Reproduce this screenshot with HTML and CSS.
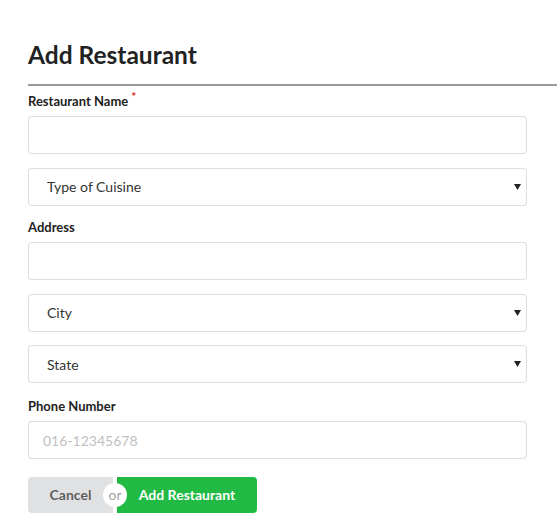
FILE: index.html
```html
<!DOCTYPE html>
<html lang="en">
<head>
    <meta charset="UTF-8">
    <meta name="viewport" content="width=device-width, initial-scale=1.0">
    <title>Add Restaurant</title>
    <link rel="stylesheet" href="styles.css">
</head>
<body>
    <div class="page">
        <h2 class="title">Add Restaurant</h2>
        <form class="form" id="restaurantForm">
            <div class="field">
                <label for="name" class="required">Restaurant Name</label>
                <input type="text" id="name">
            </div>
            <div class="field">
                <div class="select-wrap">
                    <select id="cuisine">
                        <option>Type of Cuisine</option>
                    </select>
                    <svg class="arrow" width="7" height="6" viewBox="0 0 7 6"><path d="M0 0h7L3.5 6z" fill="#222"/></svg>
                </div>
            </div>
            <div class="field">
                <label for="address">Address</label>
                <input type="text" id="address">
            </div>
            <div class="field">
                <div class="select-wrap">
                    <select id="city">
                        <option>City</option>
                    </select>
                    <svg class="arrow" width="7" height="6" viewBox="0 0 7 6"><path d="M0 0h7L3.5 6z" fill="#222"/></svg>
                </div>
            </div>
            <div class="field">
                <div class="select-wrap">
                    <select id="state">
                        <option>State</option>
                    </select>
                    <svg class="arrow" width="7" height="6" viewBox="0 0 7 6"><path d="M0 0h7L3.5 6z" fill="#222"/></svg>
                </div>
            </div>
            <div class="field phone">
                <label for="phone">Phone Number</label>
                <input type="text" id="phone" placeholder="016-12345678">
            </div>
            <div class="buttons">
                <button type="button" class="btn cancel">Cancel</button>
                <span class="or">or</span>
                <button type="submit" class="btn submit">Add Restaurant</button>
            </div>
        </form>
    </div>
</body>
</html>
```

FILE: styles.css
```css
body { margin: 0; font-family: Lato, "Open Sans", sans-serif; font-size: 14px; color: rgba(0,0,0,.87); background: #fff; }
.page { padding: 0 0 0 28px; }
.title { margin: 0; padding: 40px 0 14px; font-size: 24.5px; font-weight: 700; line-height: 30px; color: #222; border-bottom: 2px solid #9a9a9a; }
.form { width: 499px; padding-top: 7px; }
.field { margin-bottom: 13.5px; }
.phone { padding-top: 1.5px; }
label { display: block; margin-bottom: 6px; font-size: 13px; font-weight: 700; color: #222; line-height: 17px; }
.required::after { content: "*"; color: #db2828; margin-left: 3px; font-size: 12px; vertical-align: 5px; line-height: 0; }
input, select { display: block; width: 100%; box-sizing: border-box; height: 38px; margin: 0; padding: 0 14px; font-family: inherit; font-size: 14px; color: #333; background: #fff; border: 1px solid rgba(34,36,38,.15); border-radius: 4px; outline: none; }
input::placeholder { color: #bfbfbf; }
.select-wrap { position: relative; }
select { appearance: none; -webkit-appearance: none; padding-left: 18px; }
.arrow { position: absolute; right: 6px; top: 16px; }
.buttons { display: flex; position: relative; padding-top: 4px; }
.btn { height: 36px; border: none; margin: 0; font-family: inherit; font-size: 14px; font-weight: 700; cursor: pointer; }
.cancel { width: 85px; background: #e0e1e2; color: rgba(0,0,0,.6); border-radius: 4px 0 0 4px; }
.submit { width: 140px; background: #21ba45; color: #fff; border-radius: 0 4px 4px 0; margin-left: 4px; }
.or { position: absolute; left: 75px; top: 10px; width: 24px; height: 24px; line-height: 24px; border-radius: 50%; background: #fff; text-align: center; font-size: 14px; color: rgba(0,0,0,.4); }
```
